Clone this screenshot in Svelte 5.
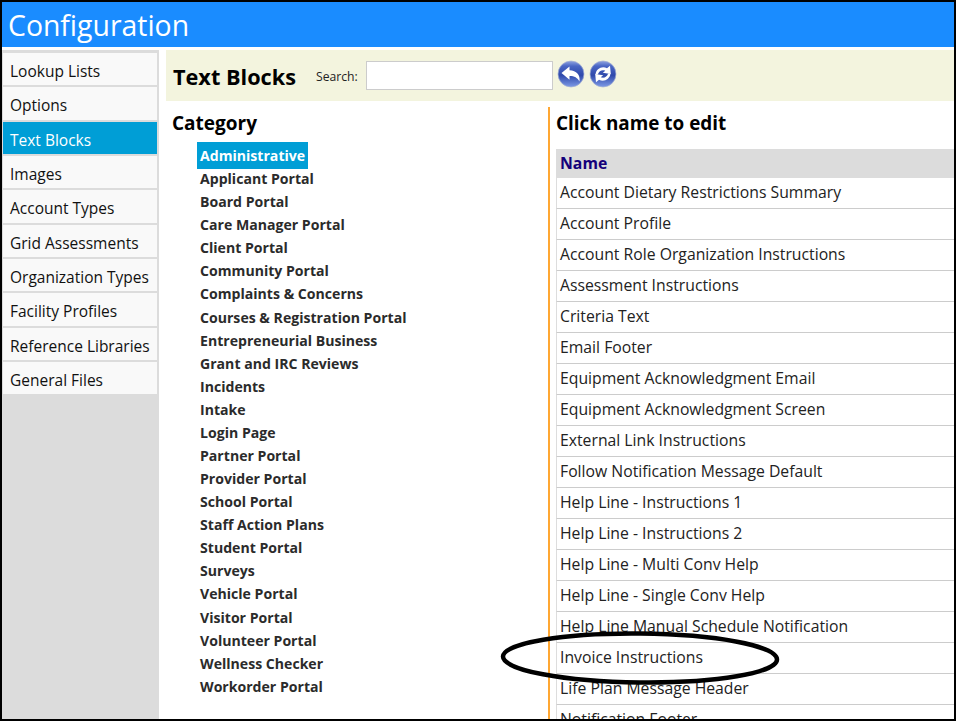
<script>
  const nav = ['Lookup Lists','Options','Text Blocks','Images','Account Types','Grid Assessments','Organization Types','Facility Profiles','Reference Libraries','General Files'];
  const cats = ['Administrative','Applicant Portal','Board Portal','Care Manager Portal','Client Portal','Community Portal','Complaints & Concerns','Courses & Registration Portal','Entrepreneurial Business','Grant and IRC Reviews','Incidents','Intake','Login Page','Partner Portal','Provider Portal','School Portal','Staff Action Plans','Student Portal','Surveys','Vehicle Portal','Visitor Portal','Volunteer Portal','Wellness Checker','Workorder Portal'];
  const names = ['Account Dietary Restrictions Summary','Account Profile','Account Role Organization Instructions','Assessment Instructions','Criteria Text','Email Footer','Equipment Acknowledgment Email','Equipment Acknowledgment Screen','External Link Instructions','Follow Notification Message Default','Help Line - Instructions 1','Help Line - Instructions 2','Help Line - Multi Conv Help','Help Line - Single Conv Help','Help Line Manual Schedule Notification','Invoice Instructions','Life Plan Message Header','Notification Footer'];
</script>

<div class="frame">
  <header class="top">Configuration</header>
  <div class="body">
    <nav class="side">
      {#each nav as n}
        <div class="item" class:on={n === 'Text Blocks'}>{n}</div>
      {/each}
    </nav>
    <main class="main">
      <div class="bar">
        <h1>Text Blocks</h1>
        <label for="s">Search:</label>
        <input id="s" />
        <svg class="btn" viewBox="0 0 28 28" aria-hidden="true">
          <defs>
            <linearGradient id="g" x1="0" y1="0" x2="0" y2="1">
              <stop offset="0" stop-color="#8fa3e0"/><stop offset="0.2" stop-color="#4a66c4"/><stop offset="0.55" stop-color="#2f49ab"/><stop offset="1" stop-color="#7d9ae6"/>
            </linearGradient>
          </defs>
          <circle cx="14" cy="14" r="13" fill="url(#g)" stroke="#a5b0d2" stroke-width="0.7"/>
          <path d="M4.500 13 L12.500 6.500 V10.300 C19.500 10.500 23.500 15 22.500 21.500 C20.500 17.800 17.500 16 12.500 16 V19.800 Z" fill="#fff"/>
        </svg>
        <svg class="btn" viewBox="0 0 28 28" aria-hidden="true">
          <circle cx="14" cy="14" r="13" fill="url(#g)" stroke="#a5b0d2" stroke-width="0.7"/>
          <path d="M6.500 14.500 C7 9 13 5.500 18 8.300 L21 5.800 L21.800 14 L13.800 12.800 L16.300 10.800 C13 9.500 10 11 8.800 14.500 Z" fill="#fff"/>
          <path d="M21.500 13.500 C21 19 15 22.500 10 19.700 L7 22.200 L6.200 14 L14.200 15.200 L11.700 17.200 C15 18.500 18 17 19.200 13.500 Z" fill="#fff"/>
        </svg>
      </div>
      <div class="cols">
        <section class="left">
          <h2>Category</h2>
          <ul>
            {#each cats as c}
              <li><span class:sel={c === 'Administrative'}>{c}</span></li>
            {/each}
          </ul>
        </section>
        <section class="right">
          <h2>Click name to edit</h2>
          <div class="table">
            <div class="th">Name</div>
            {#each names as n}
              <div class="td">{n}</div>
            {/each}
          </div>
        </section>
      </div>
    </main>
  </div>
  <svg class="circle" viewBox="0 0 290 62" aria-hidden="true">
    <ellipse cx="141" cy="31" rx="137" ry="24.500" fill="none" stroke="#000" stroke-width="4.500" transform="rotate(0.6 141 31)"/>
  </svg>
</div>

<style>
  :global(body) { margin: 0; background: #fff; }
  .frame {
    position: relative;
    box-sizing: border-box;
    width: 956px;
    height: 721px;
    border: 2px solid #000;
    overflow: hidden;
    font-family: "Open Sans", "Noto Sans", sans-serif;
    color: #000;
  }
  .top {
    height: 45px;
    background: #1a8cff;
    color: #fff;
    font-size: 28.400px;
    line-height: 47px;
    padding-left: 6px;
  }
  .body { display: flex; margin-top: 3px; height: 669px; }
  .side {
    width: 157px;
    flex: none;
    background: #dcdcdc;
    padding: 3px 2px 0 1px;
    box-sizing: border-box;
  }
  .item {
    height: 32.330px;
    margin-bottom: 2px;
    background: #f9f9f9;
    font-size: 15.500px;
    line-height: 37px;
    padding-left: 7px;
    color: #111;
    white-space: nowrap;
  }
  .item.on { background: #009ed6; color: #fff; }
  .main { flex: 1; min-width: 0; margin-left: 7px; }
  .bar {
    height: 51px;
    background: #f3f4de;
    display: flex;
    align-items: center;
    padding-left: 7px;
  }
  h1 { font-size: 21.700px; font-weight: 700; margin: 2px 20px 0 0; width: 123px; white-space: nowrap; }
  label { font-size: 12.200px; color: #222; width: 50px; flex: none; margin-top: 2px; }
  input {
    box-sizing: border-box;
    width: 187px;
    height: 29px;
    border: 1px solid #ccc;
    background: #fff;
    padding: 0;
  }
  .btn { width: 28px; height: 28px; margin: -3px 0 0 4px; flex: none; }
  .cols { display: flex; margin-top: 6px; }
  .left { width: 382px; flex: none; padding-left: 6px; box-sizing: border-box; }
  h2 { font-size: 19px; font-weight: 700; margin: 0; line-height: 32px; white-space: nowrap; }
  ul { list-style: none; margin: 5px 0 0; padding: 0 0 0 25px; }
  li { height: 23.090px; line-height: 23px; font-size: 14.100px; font-weight: 700; color: #2b2b2b; white-space: nowrap; }
  li span { display: inline-block; padding: 0 3px; }
  li span.sel { background: #009ed6; color: #fff; height: 27px; line-height: 27px; margin-top: -2px; vertical-align: top; }
  .right {
    flex: 1;
    min-width: 0;
    border-left: 2px solid #ffa733;
    padding-left: 6px;
    height: 620px;
    overflow: hidden;
  }
  .right h2 { font-size: 18.900px; }
  .table { margin-top: 10px; }
  .th {
    height: 29px;
    line-height: 29px;
    background: #dcdcdc;
    color: #14007a;
    font-weight: 700;
    font-size: 15.800px;
    padding-left: 4px;
  }
  .td {
    box-sizing: border-box;
    height: 31px;
    line-height: 29px;
    font-size: 15.750px;
    color: #222;
    padding-left: 3px;
    border-left: 1px solid #ddd;
    border-bottom: 1px solid #ccc;
    white-space: nowrap;
  }
  .circle { position: absolute; left: 497px; top: 625px; width: 290px; height: 62px; }
</style>
